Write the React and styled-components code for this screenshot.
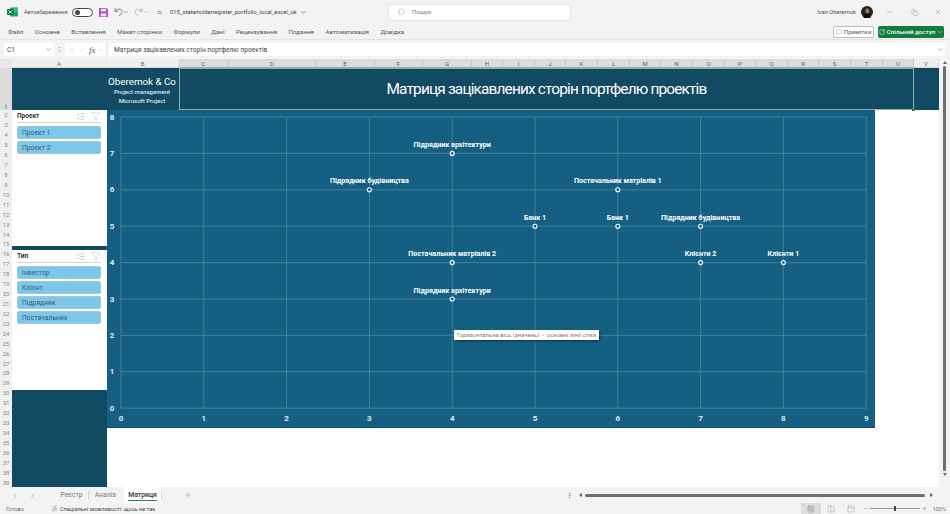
import React from 'react';
import styled, { createGlobalStyle } from 'styled-components';
import {
  ChevronDown, ChevronLeft, ChevronRight, Search, Minus, Copy, X, Check, Plus,
  MessageSquare, SquareArrowOutUpRight, ListChecks, FunnelX, Accessibility, Grid3x3, Columns2, PanelTop,
  Equal, MoreVertical
} from 'lucide-react';

const columns = [
  ['A', 95], ['B', 72], ['C', 50], ['D', 87], ['E', 59], ['F', 48], ['G', 49], ['H', 31], ['I', 32],
  ['J', 31], ['K', 32], ['L', 32], ['M', 31], ['N', 32], ['O', 32], ['P', 31], ['Q', 32], ['R', 31],
  ['S', 32], ['T', 32], ['U', 31], ['V', 25]
];
const selectedCols = 'CDEFGHIJKLMNOPQRSTU';
const ribbonTabs = ['Файл', 'Основне', 'Вставлення', 'Макет сторінки', 'Формули', 'Дані', 'Рецензування', 'Подання', 'Автоматизація', 'Довідка'];
const rows = Array.from({ length: 38 }, (_, i) => i + 2);

const points = [
  { x: 4, y: 7, label: 'Підрядник архітектури' },
  { x: 3, y: 6, label: 'Підрядник будівництва' },
  { x: 6, y: 6, label: 'Постачальник матріалів 1' },
  { x: 5, y: 5, label: 'Банк 1' },
  { x: 6, y: 5, label: 'Банк 1' },
  { x: 7, y: 5, label: 'Підрядник будівництва' },
  { x: 4, y: 4, label: 'Постачальник матріалів 2' },
  { x: 7, y: 4, label: 'Клієнти 2' },
  { x: 8, y: 4, label: 'Клієнти 1' },
  { x: 4, y: 3, label: 'Підрядник архітектури' }
];

const GlobalStyle = createGlobalStyle`
  html, body { margin: 0; padding: 0; height: 100%; overflow: hidden; }
  body { font-family: Roboto, "Noto Sans", sans-serif; color: #444; background: #f3f3f3; }
  * { box-sizing: border-box; }
`;

const Window = styled.div`
  width: 950px;
  height: 514px;
  display: flex;
  flex-direction: column;
  background: #f3f3f3;
  overflow: hidden;
`;

const TitleBar = styled.div`
  height: 24px;
  flex: none;
  display: flex;
  align-items: center;
  padding-left: 7px;
  font-size: 5.8px;
  color: #555;
`;

const AutoSave = styled.span`
  margin-left: 6px;
  width: 45px;
  font-size: 5.5px;
  white-space: nowrap;
`;

const Toggle = styled.div`
  width: 21px;
  height: 9px;
  margin-left: 3px;
  border: 1px solid #444;
  border-radius: 5px;
  background: #fff;
  display: flex;
  align-items: center;
  padding-left: 2px;
  &::before {
    content: '';
    width: 5px;
    height: 5px;
    border-radius: 50%;
    background: #444;
  }
`;

const QuickIcons = styled.div`
  width: 77px;
  display: flex;
  align-items: center;
  padding-left: 6px;
  color: #666;
`;

const FileName = styled.div`
  width: 219px;
  display: flex;
  align-items: center;
  gap: 3px;
  color: #444;
`;

const SearchBox = styled.div`
  width: 181px;
  height: 15px;
  background: #fff;
  border-radius: 2px;
  box-shadow: 0 0 2px rgba(0, 0, 0, 0.2);
  display: flex;
  align-items: center;
  gap: 7px;
  padding-left: 8px;
  font-size: 6.2px;
  color: #777;
`;

const UserArea = styled.div`
  margin-left: auto;
  display: flex;
  align-items: center;
  color: #555;
`;

const WindowButtons = styled.div`
  display: flex;
  align-items: center;
  gap: 16.5px;
  margin-left: 13px;
  margin-right: 8px;
  color: #666;
`;

const MenuBar = styled.div`
  height: 16px;
  flex: none;
  display: flex;
  align-items: center;
  padding: 0 6px 0 8px;
  gap: 11.5px;
  font-size: 6.2px;
  color: #555;
  border-bottom: 1px solid #e4e4e4;
`;

const MenuActions = styled.div`
  margin-left: auto;
  display: flex;
  align-items: center;
  gap: 4px;
`;

const NotesButton = styled.div`
  width: 41px;
  height: 12px;
  border: 1px solid #bbb;
  border-radius: 2px;
  background: #fff;
  display: flex;
  align-items: center;
  justify-content: center;
  gap: 2px;
  color: #555;
`;

const ShareButton = styled.div`
  width: 66px;
  height: 12px;
  border-radius: 2px;
  background: #107c41;
  color: #fff;
  display: flex;
  align-items: center;
  justify-content: center;
  gap: 2px;
  font-weight: 500;
  white-space: nowrap;
`;

const FormulaBar = styled.div`
  height: 19px;
  flex: none;
  display: flex;
  align-items: center;
  padding: 0 5px 0 4px;
  font-size: 6.6px;
  color: #444;
`;

const NameBox = styled.div`
  width: 50px;
  height: 13px;
  background: #fff;
  display: flex;
  align-items: center;
  justify-content: space-between;
  padding: 0 2px 0 3px;
`;

const BarDivider = styled.div`
  width: 11px;
  color: #888;
  text-align: center;
`;

const FormulaTools = styled.div`
  width: 40px;
  height: 13px;
  background: #fff;
  display: flex;
  align-items: center;
  gap: 3px;
  padding: 0 1px 0 3px;
  color: #aaa;
`;

const FxLabel = styled.i`
  font-family: "Liberation Serif", serif;
  font-size: 9px;
  color: #555;
`;

const FormulaInput = styled.div`
  flex: 1;
  height: 13px;
  margin-left: 4px;
  background: #fff;
  display: flex;
  align-items: center;
  justify-content: space-between;
  padding: 0 1px 0 5px;
`;

const Workbook = styled.div`
  flex: 1;
  min-height: 0;
  display: flex;
`;

const SheetPane = styled.div`
  flex: 1;
  min-width: 0;
  display: flex;
  flex-direction: column;
`;

const HeaderRow = styled.div`
  height: 9px;
  flex: none;
  display: flex;
  font-size: 6px;
  background: #efefef;
`;

const Corner = styled.div`
  width: 12px;
  background: #e9e9e9;
`;

const ColHeader = styled.div`
  flex: none;
  display: flex;
  align-items: center;
  justify-content: center;
  color: ${p => (p.$active ? '#2b7d58' : '#666')};
  background: ${p => (p.$active ? '#dcdcdc' : '#efefef')};
  border-right: 1px solid ${p => (p.$active ? '#c8c8c8' : '#e0e0e0')};
  border-bottom: 1px solid ${p => (p.$active ? '#8fb0a5' : '#dadada')};
`;

const SheetBody = styled.div`
  flex: 1;
  min-height: 0;
  display: flex;
`;

const RowHeaders = styled.div`
  width: 12px;
  flex: none;
  display: flex;
  flex-direction: column;
  font-size: 6px;
  color: #888;
  background: #f0f0f0;
`;

const RowOne = styled.div`
  height: 42px;
  flex: none;
  display: flex;
  align-items: flex-end;
  justify-content: center;
  color: #2b7d58;
  background: #dcdcdc;
`;

const RowNumber = styled.div`
  flex: 1;
  display: flex;
  align-items: center;
  justify-content: center;
`;

const Cells = styled.div`
  flex: 1;
  min-width: 0;
  display: flex;
  flex-direction: column;
  background: #fff;
`;

const Banner = styled.div`
  height: 42px;
  flex: none;
  display: flex;
  background: #134a63;
  color: #fff;
`;

const BannerSpacer = styled.div`
  width: 95px;
  flex: none;
`;

const Brand = styled.div`
  width: 72px;
  flex: none;
  display: flex;
  flex-direction: column;
  align-items: center;
  justify-content: center;
  padding-top: 2px;
  padding-right: 2px;
  line-height: 8.5px;
  font-size: 6px;
  font-weight: 500;
  color: #dfe9ee;
`;

const BrandName = styled.div`
  font-size: 9.8px;
  font-weight: 400;
  line-height: 13px;
  color: #fff;
  white-space: nowrap;
`;

const TitleCell = styled.div`
  width: 735px;
  flex: none;
  position: relative;
  display: flex;
  align-items: center;
  justify-content: center;
  padding-bottom: 1px;
  border: 1px solid #8fb0a5;
  font-size: 15.4px;
  letter-spacing: -0.84px;
  &::after {
    content: '';
    position: absolute;
    right: -2px;
    bottom: -2px;
    width: 3px;
    height: 3px;
    background: #2b7d58;
  }
`;

const Content = styled.div`
  flex: 1;
  min-height: 0;
  display: flex;
`;

const Sidebar = styled.div`
  width: 95px;
  flex: none;
  display: flex;
  flex-direction: column;
  background: #134a63;
`;

const Slicer = styled.div`
  height: ${p => p.$height}px;
  flex: none;
  margin-top: ${p => p.$top || 0}px;
  background: #fff;
  padding: 0 6px 0 5px;
`;

const SlicerHead = styled.div`
  height: 13px;
  display: flex;
  align-items: center;
  font-size: 6.5px;
  font-weight: 700;
  color: #333;
  margin-bottom: 3px;
  border-bottom: 1px solid #d5d5d5;
`;

const SlicerIcons = styled.div`
  margin-left: auto;
  display: flex;
  align-items: center;
  gap: 6px;
  color: #666;
`;

const SlicerItem = styled.div`
  height: 13px;
  margin-bottom: 2px;
  padding-left: 4px;
  display: flex;
  align-items: center;
  font-size: 6.6px;
  letter-spacing: 0.1px;
  color: #2f5a70;
  background: #7fc7ea;
  border: 1px solid #9cc8dd;
  border-radius: 2px;
`;

const ChartPanel = styled.div`
  width: 768px;
  height: 318px;
  flex: none;
  position: relative;
  background: #156082;
  border-bottom: 1px solid #0f4a68;
`;

const ChartSvg = styled.svg`
  display: block;
  width: 768px;
  height: 318px;
  font-family: Roboto, "Liberation Sans", sans-serif;
  font-weight: 700;
  font-size: 7.1px;
`;

const AxisLabel = styled.text`
  font-size: 8px;
  fill: #e3edf2;
`;

const ChartTip = styled.div`
  position: absolute;
  left: 347px;
  top: 220px;
  height: 10px;
  padding: 0 3px;
  display: flex;
  align-items: center;
  background: #fff;
  color: #777;
  font-size: 5.9px;
  white-space: pre;
  box-shadow: 1px 1px 2px rgba(0, 0, 0, 0.5);
`;

const VScroll = styled.div`
  width: 11px;
  flex: none;
  display: flex;
  flex-direction: column;
  align-items: center;
  color: #666;
  background: #f3f3f3;
  padding-top: 2px;
`;

const VThumb = styled.div`
  width: 3px;
  height: 405px;
  margin: 2px 0;
  border-radius: 2px;
  background: #6e6e6e;
`;

const Arrow = styled.div`
  width: 0;
  height: 0;
  border: 2.5px solid transparent;
  ${p => p.$dir === 'up' && 'border-bottom: 3px solid #666; border-top-width: 0;'}
  ${p => p.$dir === 'down' && 'border-top: 3px solid #666; border-bottom-width: 0;'}
  ${p => p.$dir === 'left' && 'border-right: 3px solid #666; border-left-width: 0;'}
  ${p => p.$dir === 'right' && 'border-left: 3px solid #666; border-right-width: 0;'}
`;

const TabBar = styled.div`
  height: 16px;
  flex: none;
  display: flex;
  align-items: center;
  padding-left: 12px;
  font-size: 6.8px;
  color: #777;
`;

const TabNav = styled.div`
  width: 43px;
  display: flex;
  gap: 10px;
  color: #999;
`;

const SheetTab = styled.div`
  height: 16px;
  padding: 0 ${p => (p.$active ? '4px' : '5.5px')};
  margin-left: ${p => (p.$active ? '3px' : '0')};
  display: flex;
  align-items: center;
  position: relative;
  background: ${p => (p.$active ? '#fff' : 'transparent')};
  color: ${p => (p.$active ? '#333' : '#777')};
  font-weight: ${p => (p.$active ? 500 : 400)};
  ${p => p.$active && `
    &::after {
      content: '';
      position: absolute;
      left: 4px;
      right: 4px;
      bottom: 2px;
      height: 1px;
      background: #2b7d58;
    }
  `}
`;

const TabSep = styled.div`
  width: 1px;
  height: 9px;
  background: #d5d5d5;
`;

const AddSheet = styled.div`
  margin-left: 22px;
  display: flex;
  color: #777;
`;

const HScrollArea = styled.div`
  margin-left: auto;
  width: 384px;
  display: flex;
  align-items: center;
  color: #666;
  padding-right: 11px;
`;

const HThumb = styled.div`
  width: 340px;
  height: 3px;
  margin: 0 5px 0 3px;
  border-radius: 2px;
  background: #6e6e6e;
`;

const StatusBar = styled.div`
  height: 11px;
  flex: none;
  display: flex;
  align-items: center;
  padding-left: 6px;
  font-size: 5.6px;
  color: #666;
`;

const AccessHint = styled.div`
  margin-left: 27px;
  display: flex;
  align-items: center;
  gap: 2px;
  color: #444;
`;

const ViewButtons = styled.div`
  margin-left: auto;
  display: flex;
  align-items: center;
  height: 11px;
  color: #777;
`;

const ViewButton = styled.div`
  width: 20px;
  height: 11px;
  display: flex;
  align-items: center;
  justify-content: center;
  background: ${p => (p.$active ? '#dedede' : 'transparent')};
`;

const ZoomControl = styled.div`
  margin-left: 2px;
  margin-right: 4px;
  display: flex;
  align-items: center;
  color: #777;
  gap: 2px;
`;

const ZoomTrack = styled.div`
  width: 50px;
  height: 1px;
  background: #999;
  position: relative;
  &::after {
    content: '';
    position: absolute;
    left: 24px;
    top: -2px;
    width: 2px;
    height: 5px;
    background: #444;
  }
`;

function ExcelLogo() {
  return (
    <svg width="11" height="10" viewBox="0 0 11 10">
      <rect x="3" y="0.5" width="8" height="9" rx="1" fill="#21a366" />
      <rect x="7" y="0.5" width="4" height="4.5" fill="#33c481" />
      <rect x="0" y="2" width="6.5" height="6" rx="0.8" fill="#107c41" />
      <path d="M1.7 3.4 L4.8 6.6 M4.8 3.4 L1.7 6.6" stroke="#fff" strokeWidth="0.8" />
    </svg>
  );
}

function SaveIcon() {
  return (
    <svg width="9" height="9" viewBox="0 0 9 9" style={{ marginRight: 6 }}>
      <path d="M0 0 H7.5 L9 1.5 V9 H0 Z" fill="#b04ec4" />
      <rect x="2" y="0.8" width="5" height="2.6" fill="#f3e6f6" />
      <rect x="1.8" y="5.4" width="5.4" height="3" fill="#f3e6f6" />
    </svg>
  );
}

// office style undo hook, mirrored for redo
function HistoryIcon({ mirrored, color }) {
  return (
    <svg
      width="9"
      height="10"
      viewBox="0 0 9 10"
      fill="none"
      stroke={color}
      strokeWidth="0.8"
      style={mirrored ? { transform: 'scaleX(-1)' } : undefined}
    >
      <path d="M1 1.2 V4.4 H4.2 M1 4.4 C2.8 1.4 8 1.4 8 4.4 C8 6.2 6.4 7.8 4.6 9" />
    </svg>
  );
}

function Avatar() {
  return (
    <svg width="12" height="12" viewBox="0 0 12 12" style={{ marginLeft: 5 }}>
      <circle cx="6" cy="6" r="6" fill="#2a211c" />
      <ellipse cx="6.3" cy="4.8" rx="2" ry="2.5" fill="#9a7458" />
      <path d="M2.5 12 Q3 8 6 8 Q9 8 9.6 12 Z" fill="#0f0d0c" />
    </svg>
  );
}

function Chart() {
  const left = 14;
  const stepX = 82.8;
  const top = 7;
  const stepY = 36.4;
  const px = x => left + x * stepX;
  const py = y => top + (8 - y) * stepY;
  const xs = [0, 1, 2, 3, 4, 5, 6, 7, 8, 9];
  const ys = [0, 1, 2, 3, 4, 5, 6, 7, 8];

  return (
    <ChartSvg viewBox="0 0 768 318">
      {xs.map(x => (
        <line key={x} x1={px(x)} x2={px(x)} y1={py(8)} y2={py(0)} stroke="#4b87a3" strokeWidth="0.8" />
      ))}
      {ys.map(y => (
        <line key={y} x1={px(0)} x2={px(9)} y1={py(y)} y2={py(y)} stroke="#4b87a3" strokeWidth="0.8" />
      ))}
      {xs.map(x => (
        <AxisLabel key={x} x={px(x)} y={py(0) + 13} textAnchor="middle">{x}</AxisLabel>
      ))}
      {ys.map(y => (
        <AxisLabel key={y} x={5} y={py(y) + 2.5} textAnchor="middle">{y}</AxisLabel>
      ))}
      {points.map(pt => (
        <g key={pt.label + pt.x + pt.y}>
          <circle cx={px(pt.x)} cy={py(pt.y)} r="2" fill="#156082" stroke="#fff" strokeWidth="1.1" />
          <text x={px(pt.x)} y={py(pt.y) - 6.5} textAnchor="middle" fill="#fff">{pt.label}</text>
        </g>
      ))}
    </ChartSvg>
  );
}

function SlicerBox({ title, items, height, top }) {
  return (
    <Slicer $height={height} $top={top}>
      <SlicerHead>
        {title}
        <SlicerIcons>
          <ListChecks size={9} strokeWidth={1} />
          <FunnelX size={10} strokeWidth={1} color="#aaa" />
        </SlicerIcons>
      </SlicerHead>
      {items.map(item => <SlicerItem key={item}>{item}</SlicerItem>)}
    </Slicer>
  );
}

export default function App() {
  return (
    <Window>
      <GlobalStyle />
      <TitleBar>
        <ExcelLogo />
        <AutoSave>Автозбереження</AutoSave>
        <Toggle />
        <QuickIcons>
          <SaveIcon />
          <HistoryIcon color="#666" />
          <ChevronDown size={6} style={{ marginRight: 5 }} />
          <HistoryIcon mirrored color="#aaa" />
          <ChevronDown size={6} color="#aaa" style={{ marginRight: 7 }} />
          <Equal size={7} />
        </QuickIcons>
        <FileName>
          015_stakeholderregister_portfolio_local_excel_uk
          <ChevronDown size={7} />
        </FileName>
        <SearchBox>
          <Search size={8} strokeWidth={1} style={{ transform: 'scaleX(-1)' }} />
          Пошук
        </SearchBox>
        <UserArea>
          Ivan Oberemok
          <Avatar />
          <WindowButtons>
            <Minus size={8} strokeWidth={1} />
            <Copy size={7} strokeWidth={1} />
            <X size={8} strokeWidth={1} />
          </WindowButtons>
        </UserArea>
      </TitleBar>

      <MenuBar>
        {ribbonTabs.map(tab => <span key={tab}>{tab}</span>)}
        <MenuActions>
          <NotesButton>
            <MessageSquare size={6} strokeWidth={1} />
            Примітки
          </NotesButton>
          <ShareButton>
            <SquareArrowOutUpRight size={6} />
            Спільний доступ
            <ChevronDown size={6} />
          </ShareButton>
        </MenuActions>
      </MenuBar>

      <FormulaBar>
        <NameBox>
          C1
          <ChevronDown size={7} color="#777" />
        </NameBox>
        <BarDivider>⁝</BarDivider>
        <FormulaTools>
          <X size={8} strokeWidth={1} />
          <Check size={8} strokeWidth={1} />
          <FxLabel>fx</FxLabel>
          <ChevronDown size={6} />
        </FormulaTools>
        <FormulaInput>
          Матриця зацікавлених сторін портфелю проектів
          <ChevronDown size={7} color="#777" />
        </FormulaInput>
      </FormulaBar>

      <Workbook>
        <SheetPane>
          <HeaderRow>
            <Corner />
            {columns.map(([name, width]) => (
              <ColHeader key={name} $active={selectedCols.includes(name)} style={{ width }}>{name}</ColHeader>
            ))}
          </HeaderRow>
          <SheetBody>
            <RowHeaders>
              <RowOne>1</RowOne>
              {rows.map(n => <RowNumber key={n}>{n}</RowNumber>)}
            </RowHeaders>
            <Cells>
              <Banner>
                <BannerSpacer />
                <Brand>
                  <BrandName>Oberemok &amp; Co</BrandName>
                  <span>Project management</span>
                  <span>Microsoft Project</span>
                </Brand>
                <TitleCell>Матриця зацікавлених сторін портфелю проектів</TitleCell>
              </Banner>
              <Content>
                <Sidebar>
                  <SlicerBox title="Проект" items={['Проект 1', 'Проект 2']} height={136} />
                  <SlicerBox title="Тип" items={['Інвестор', 'Клієнт', 'Підрядник', 'Постачальник']} height={140} top={4} />
                </Sidebar>
                <ChartPanel>
                  <Chart />
                  <ChartTip>{'Горизонтальна вісь (значень)  -  основні лінії сітки'}</ChartTip>
                </ChartPanel>
              </Content>
            </Cells>
          </SheetBody>
        </SheetPane>
        <VScroll>
          <Arrow $dir="up" />
          <VThumb />
          <Arrow $dir="down" />
        </VScroll>
      </Workbook>

      <TabBar>
        <TabNav>
          <ChevronLeft size={7} />
          <ChevronRight size={7} />
        </TabNav>
        <SheetTab>Реєстр</SheetTab>
        <TabSep />
        <SheetTab>Аналіз</SheetTab>
        <SheetTab $active>Матриця</SheetTab>
        <TabSep />
        <AddSheet><Plus size={8} strokeWidth={1} /></AddSheet>
        <HScrollArea>
          <MoreVertical size={7} />
          <Arrow $dir="left" style={{ marginLeft: 6 }} />
          <HThumb />
          <Arrow $dir="right" />
        </HScrollArea>
      </TabBar>

      <StatusBar>
        Готово
        <AccessHint>
          <Accessibility size={7} strokeWidth={1} />
          Спеціальні можливості: щось не так
        </AccessHint>
        <ViewButtons>
          <ViewButton $active><Grid3x3 size={8} strokeWidth={1} /></ViewButton>
          <ViewButton><Columns2 size={8} strokeWidth={1} /></ViewButton>
          <ViewButton><PanelTop size={8} strokeWidth={1} /></ViewButton>
        </ViewButtons>
        <ZoomControl>
          <Minus size={5} />
          <ZoomTrack />
          <Plus size={5} />
          <span style={{ marginLeft: 3 }}>100%</span>
        </ZoomControl>
      </StatusBar>
    </Window>
  );
}
